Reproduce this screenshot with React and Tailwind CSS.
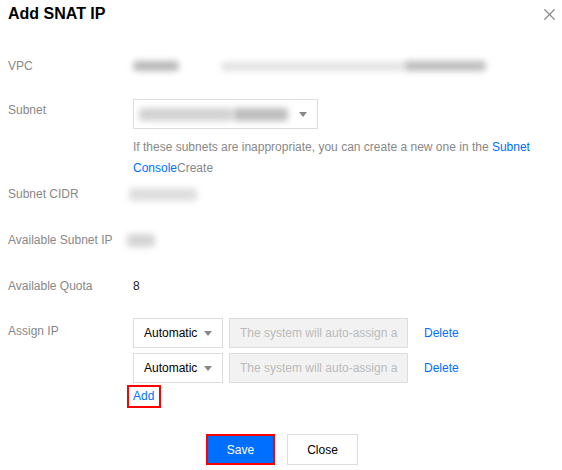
import { X } from "lucide-react"

const font = { fontFamily: '"Liberation Sans", Arial, sans-serif' }

function Caret() {
    return (
        <svg width="8" height="5" viewBox="0 0 8 5" className="shrink-0">
            <path d="M0 0 L8 0 L4 5 Z" fill="#888" />
        </svg>
    )
}

function Blur({ className }) {
    return <div className={"rounded-sm blur-[3px] " + className} />
}

function Row({ label, className = "", labelClass = "", children }) {
    return (
        <div className={"flex items-start " + className}>
            <div className={"w-[125px] shrink-0 text-[12px] leading-[20px] text-[#888] " + labelClass}>{label}</div>
            <div className="flex-1 min-w-0">{children}</div>
        </div>
    )
}

function IpRow() {
    return (
        <div className="flex items-center h-[30px]">
            <div className="w-[90px] h-full border border-[#ddd] bg-white flex items-center justify-between pl-[10px] pr-[10px]">
                <span className="text-[12px] text-black">Automatic</span>
                <Caret />
            </div>
            <div className="ml-[6px] w-[179px] h-full border border-[#ddd] bg-[#f2f2f2] flex items-center pl-[10px] overflow-hidden whitespace-nowrap">
                <span className="text-[12px] text-[#bbb]">The system will auto-assign a</span>
            </div>
            <a className="ml-[16px] text-[12px] text-[#006eff] cursor-pointer">Delete</a>
        </div>
    )
}

export default function App() {
    return (
        <div className="w-[562px] h-[470px] bg-white overflow-hidden relative" style={font}>
            <div className="h-[28px] flex items-center justify-between pl-2 pr-[3px]">
                <h2 className="text-[16px] font-bold text-black">Add SNAT IP</h2>
                <X size={19} strokeWidth={1.5} className="text-[#888]" />
            </div>

            <div className="pl-2">
                <Row label="VPC" className="mt-[28px]">
                    <div className="flex items-center h-[20px]">
                        <Blur className="w-[46px] h-[10px] bg-[#b8b8b8]" />
                        <Blur className="ml-[42px] w-[183px] h-[9px] bg-[#e2e2e2]" />
                        <Blur className="w-[82px] h-[10px] bg-[#bdbdbd]" />
                    </div>
                </Row>

                <Row label="Subnet" className="mt-[23px]" labelClass="pt-[1px]">
                    <div className="w-[185px] h-[30px] border border-[#ddd] flex items-center justify-between pl-[5px] pr-[10px]">
                        <div className="flex items-center">
                            <Blur className="w-[94px] h-[13px] bg-[#d2d2d2]" />
                            <Blur className="w-[55px] h-[13px] bg-[#bdbdbd]" />
                        </div>
                        <Caret />
                    </div>
                    <p className="mt-[8px] text-[12px] leading-[21px] text-[#888]">
                        If these subnets are inappropriate, you can create a new one in the <a className="text-[#006eff]">Subnet</a>
                        <br />
                        <a className="text-[#006eff]">Console</a>Create
                    </p>
                </Row>

                <Row label="Subnet CIDR" className="mt-[5px]">
                    <div className="h-[20px] flex items-center -ml-[4px]">
                        <Blur className="w-[68px] h-[13px] bg-[#dedede]" />
                    </div>
                </Row>

                <Row label="Available Subnet IP" className="mt-[26px]">
                    <div className="h-[20px] flex items-center -ml-[6px]">
                        <Blur className="w-[28px] h-[13px] bg-[#d4d4d4]" />
                    </div>
                </Row>

                <Row label="Available Quota" className="mt-[26px]">
                    <div className="text-[12px] leading-[20px] text-[#222]">8</div>
                </Row>

                <Row label="Assign IP" className="mt-[22px]" labelClass="pt-[3px]">
                    <div className="flex flex-col gap-[5px]">
                        <IpRow />
                        <IpRow />
                    </div>
                    <div className="mt-[2px] -ml-[6px] inline-flex items-center border-2 border-[#ff0000] h-[23px] pl-[4px] pr-[5px]">
                        <a className="text-[12px] text-[#006eff] leading-[19px]">Add</a>
                    </div>
                </Row>
            </div>

            <div className="mt-[26px] flex justify-center gap-[12px] pl-[2px]">
                <button className="w-[69px] h-[31px] border-2 border-[#ff0000] bg-[#006eff] text-white text-[12px]">Save</button>
                <button className="w-[71px] h-[31px] border border-[#ddd] bg-white text-black text-[12px]">Close</button>
            </div>
        </div>
    )
}
